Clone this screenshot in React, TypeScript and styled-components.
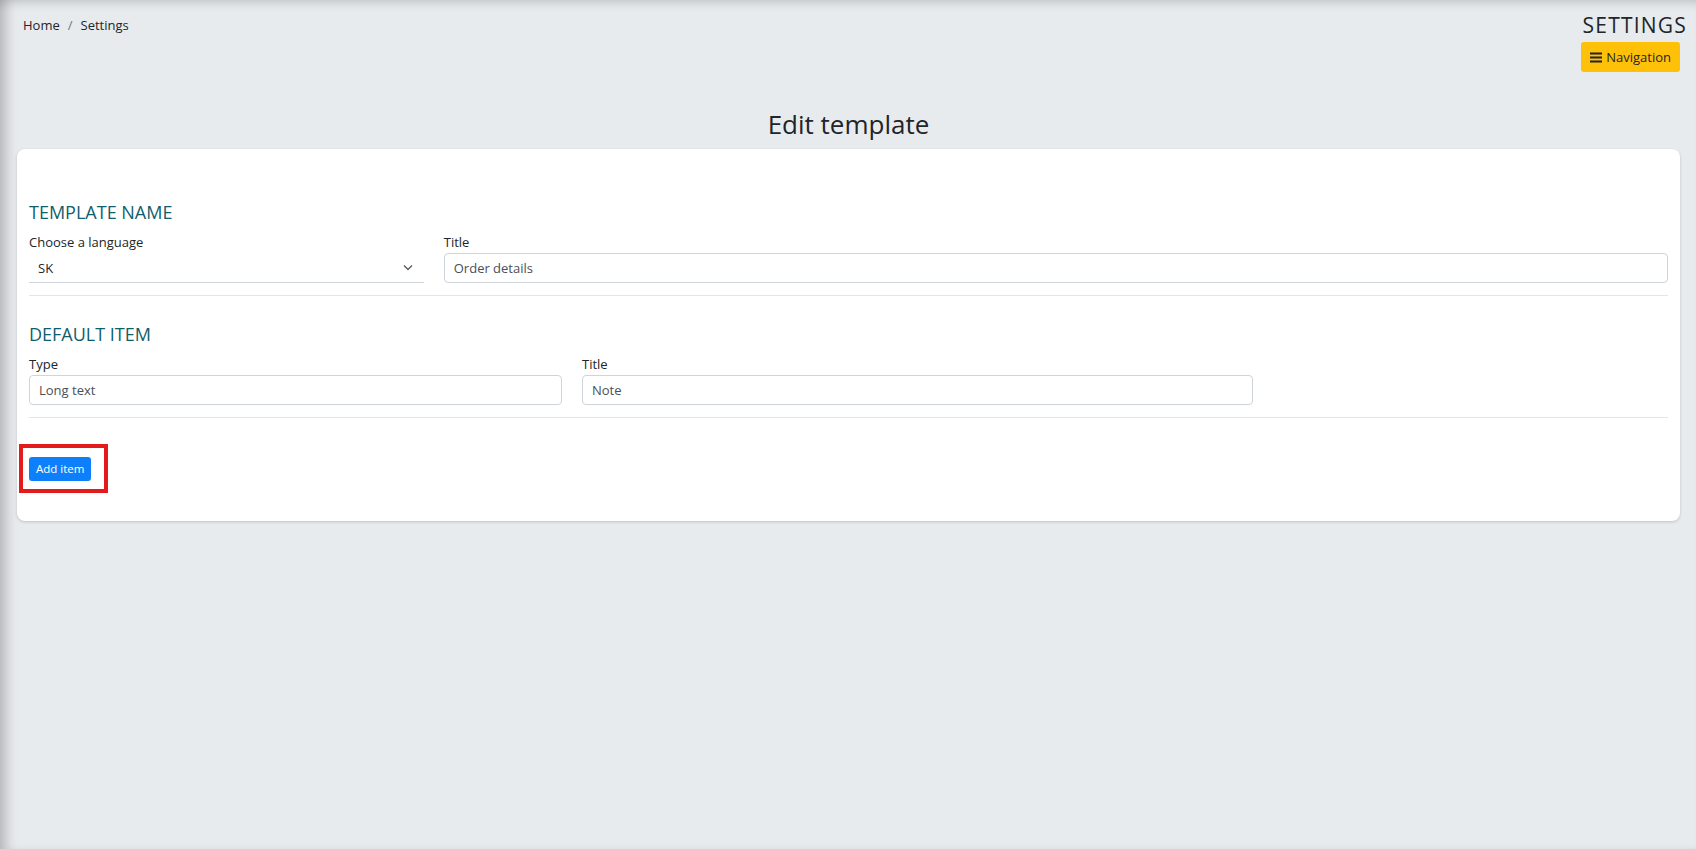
import styled, { createGlobalStyle } from "styled-components";

const GlobalStyle = createGlobalStyle`
  html, body {
    margin: 0;
    padding: 0;
    background: #e8ebee;
  }
  body {
    font-family: "Open Sans", "Liberation Sans", sans-serif;
    color: #212529;
  }
  * {
    box-sizing: border-box;
  }
`;

const Page = styled.div`
  min-height: 849px;
  background: #e8ebee;
  box-shadow: inset 12px 0 12px -6px rgba(0, 0, 0, 0.22),
    inset 0 10px 10px -6px rgba(0, 0, 0, 0.12);
  padding: 0 16px 0 17px;
  display: flex;
  flex-direction: column;
`;

const TopBar = styled.div`
  display: flex;
  justify-content: space-between;
  align-items: flex-start;
  padding-top: 13px;
`;

const Breadcrumb = styled.nav`
  display: flex;
  align-items: center;
  font-size: 13px;
  padding-left: 6px;
  line-height: 24px;
`;

const Crumb = styled.span`
  color: #212529;
`;

const Separator = styled.span`
  color: #6c757d;
  padding: 0 8px;
`;

const HeaderRight = styled.div`
  display: flex;
  flex-direction: column;
  align-items: flex-end;
  gap: 5px;
  margin-right: -7px;
`;

const SectionName = styled.div`
  font-size: 21px;
  line-height: 24px;
  letter-spacing: 1.2px;
  text-transform: uppercase;
  color: #212529;
`;

const NavButton = styled.button`
  display: flex;
  align-items: center;
  gap: 4px;
  height: 30px;
  padding: 0 9px;
  margin-right: 7px;
  border: none;
  border-radius: 3px;
  background: #ffc107;
  color: #212529;
  font-family: inherit;
  font-size: 13px;
  cursor: pointer;
`;

const PageTitle = styled.h1`
  margin: 37px 0 9px;
  text-align: center;
  font-size: 26px;
  line-height: 31px;
  font-weight: 400;
  color: #212529;
`;

const Card = styled.div`
  background: #fff;
  border-radius: 8px;
  box-shadow: 0 1px 3px rgba(0, 0, 0, 0.18);
  padding: 51px 12px 40px;
`;

const SectionTitle = styled.h5`
  margin: 0 0 8px;
  font-size: 18px;
  line-height: 24px;
  font-weight: 400;
  color: #0f5e6c;
  text-transform: uppercase;
`;

const Row = styled.div`
  display: grid;
  grid-template-columns: repeat(12, 1fr);
  column-gap: 20px;
`;

const Field = styled.div<{ $span: number }>`
  grid-column: span ${(p) => p.$span};
  display: flex;
  flex-direction: column;
`;

const Label = styled.label`
  font-size: 13px;
  line-height: 20px;
  margin-bottom: 1px;
  color: #212529;
`;

const Input = styled.div`
  height: 30px;
  display: flex;
  align-items: center;
  padding: 0 9px;
  border: 1px solid #ced4da;
  border-radius: 4px;
  font-size: 13px;
  color: #495057;
`;

const Select = styled.div`
  height: 30px;
  display: flex;
  align-items: center;
  justify-content: space-between;
  padding: 0 11px 0 9px;
  border-bottom: 1px solid #ced4da;
  font-size: 13px;
  color: #212529;
`;

const Divider = styled.hr`
  border: none;
  border-top: 1px solid #e3e6e9;
  margin: 12px 0 26px;
`;

const LastDivider = styled(Divider)`
  margin-bottom: 38px;
`;

const Highlight = styled.span`
  position: relative;
  display: inline-block;
  &::after {
    content: "";
    position: absolute;
    top: -13px;
    left: -10px;
    right: -17px;
    bottom: -12px;
    border: 4px solid #e31b1d;
    pointer-events: none;
  }
`;

const PrimaryButton = styled.button`
  display: block;
  height: 24px;
  padding: 0 7px;
  border: none;
  border-radius: 3px;
  background: #0d7ffb;
  color: #fff;
  font-family: inherit;
  font-size: 11.5px;
  cursor: pointer;
`;

function Chevron() {
  return (
    <svg width="10" height="7" viewBox="0 0 10 7" fill="none">
      <path d="M1 1.5l4 4 4-4" stroke="#5a5f66" strokeWidth="1.4" />
    </svg>
  );
}

function Bars() {
  return (
    <svg width="12" height="11" viewBox="0 0 12 11" fill="#212529">
      <rect x="0" y="0.5" width="12" height="2" />
      <rect x="0" y="4.5" width="12" height="2" />
      <rect x="0" y="8.5" width="12" height="2" />
    </svg>
  );
}

function App() {
  return (
    <Page>
      <GlobalStyle />
      <TopBar>
        <Breadcrumb>
          <Crumb>Home</Crumb>
          <Separator>/</Separator>
          <Crumb>Settings</Crumb>
        </Breadcrumb>
        <HeaderRight>
          <SectionName>Settings</SectionName>
          <NavButton>
            <Bars />
            Navigation
          </NavButton>
        </HeaderRight>
      </TopBar>

      <PageTitle>Edit template</PageTitle>

      <Card>
        <SectionTitle>Template name</SectionTitle>
        <Row>
          <Field $span={3}>
            <Label>Choose a language</Label>
            <Select>
              SK
              <Chevron />
            </Select>
          </Field>
          <Field $span={9}>
            <Label>Title</Label>
            <Input>Order details</Input>
          </Field>
        </Row>
        <Divider />

        <SectionTitle>Default item</SectionTitle>
        <Row>
          <Field $span={4}>
            <Label>Type</Label>
            <Input>Long text</Input>
          </Field>
          <Field $span={5}>
            <Label>Title</Label>
            <Input>Note</Input>
          </Field>
        </Row>
        <LastDivider />

        <Highlight>
          <PrimaryButton>Add item</PrimaryButton>
        </Highlight>
      </Card>
    </Page>
  );
}

export default App;
